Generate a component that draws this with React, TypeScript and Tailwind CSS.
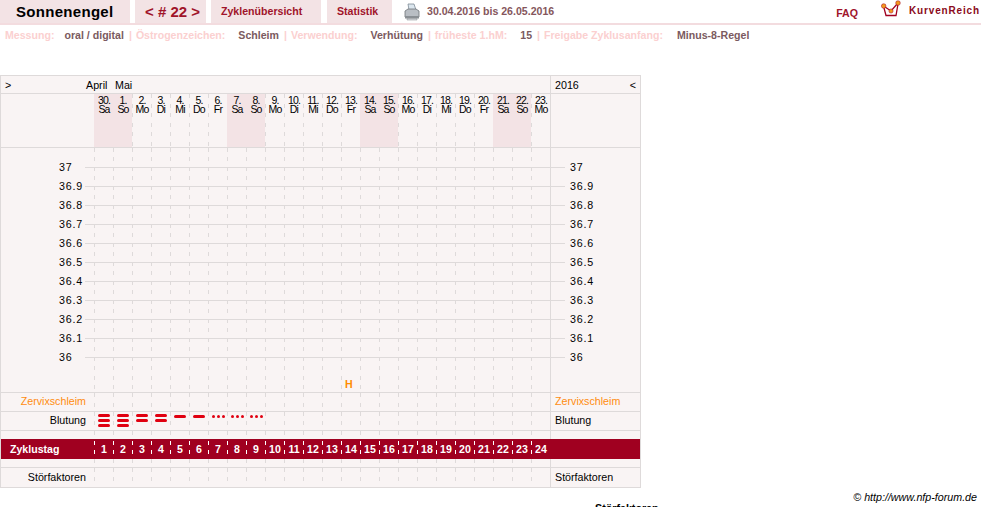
const days = [
  ["30.", "Sa", 1], ["1.", "So", 1], ["2.", "Mo", 0], ["3.", "Di", 0], ["4.", "Mi", 0], ["5.", "Do", 0],
  ["6.", "Fr", 0], ["7.", "Sa", 1], ["8.", "So", 1], ["9.", "Mo", 0], ["10.", "Di", 0], ["11.", "Mi", 0],
  ["12.", "Do", 0], ["13.", "Fr", 0], ["14.", "Sa", 1], ["15.", "So", 1], ["16.", "Mo", 0], ["17.", "Di", 0],
  ["18.", "Mi", 0], ["19.", "Do", 0], ["20.", "Fr", 0], ["21.", "Sa", 1], ["22.", "So", 1], ["23.", "Mo", 0],
] as const;

const temps = ["37", "36.9", "36.8", "36.7", "36.6", "36.5", "36.4", "36.3", "36.2", "36.1", "36"];
const bleeding = [3, 3, 2, 2, 1, 1, 0, 0, 0];

const dash =
  "bg-[repeating-linear-gradient(to_bottom,#dedada_0,#dedada_4px,transparent_4px,transparent_9.5px)] bg-no-repeat bg-[length:1px_100%]";
const dashWhite =
  "bg-[repeating-linear-gradient(to_bottom,#ffffff_0,#ffffff_4px,transparent_4px,transparent_9.5px)] bg-no-repeat bg-[length:1px_100%]";

const Printer = () => (
  <svg width="16" height="18" viewBox="0 0 16 18" className="mr-[7px] shrink-0">
    <path d="M4 1h6l2 6H5z" fill="#dbe6ee" stroke="#7d8a96" strokeWidth="0.8" />
    <path d="M1 8l3-2h8l3 2v6H1z" fill="#b9bec4" stroke="#6f7478" strokeWidth="0.8" />
    <path d="M1 13h14v2.5H1z" fill="#8a8f94" />
    <path d="M3 15.5h10v1.5H3z" fill="#d5d8db" stroke="#85898d" strokeWidth="0.5" />
  </svg>
);

const Logo = () => (
  <svg width="20" height="18" viewBox="0 0 20 18" className="shrink-0">
    <path d="M3 8l2 7.5h10L17 4" fill="none" stroke="#a00020" strokeWidth="1.3" />
    <path d="M2.5 6L10 11 17 3" fill="none" stroke="#a00020" strokeWidth="1.3" />
    <circle cx="2.7" cy="6" r="2.3" fill="#f39a1e" stroke="#a00020" strokeWidth="0.5" />
    <circle cx="10" cy="11" r="2.1" fill="#f39a1e" stroke="#a00020" strokeWidth="0.5" />
    <circle cx="17" cy="3" r="2.3" fill="#f39a1e" stroke="#a00020" strokeWidth="0.5" />
  </svg>
);

const Cols = ({ dark = false }: { dark?: boolean }) => (
  <div className="flex h-full">
    {days.map((_, i) => (
      <div key={i} className={`h-full w-[19px] ${dark ? dashWhite : dash}`} />
    ))}
  </div>
);

const Row = ({
  label,
  color = "text-black",
  right,
  height = "h-[19px] border-b border-[#dedada]",
  leading = "leading-[17px]",
  children,
}: {
  label?: string;
  color?: string;
  right?: string;
  height?: string;
  leading?: string;
  children?: React.ReactNode;
}) => (
  <div className={`flex ${height}`}>
    <div className={`w-[93px] shrink-0 pr-[8px] text-right ${leading} ${color}`}>{label}</div>
    <div className="relative w-[456px] shrink-0">
      <Cols />
      {children}
    </div>
    <div className={`flex-1 border-l border-[#dedada] pl-[4px] ${leading} ${color}`}>{right}</div>
  </div>
);

export default function App() {
  return (
    <div className="relative h-[507px] w-[981px] overflow-hidden bg-white font-['Liberation_Sans',Arial,sans-serif] text-[10.7px]">
      {/* top nav */}
      <div className="flex h-[25px] border-b-2 border-[#f3dcdf] text-[10.6px] font-bold text-[#a0142a]">
        <div className="flex w-[130px] items-center bg-[#f3e3e5] pl-[16px] pt-[2px] text-[15px] tracking-[0.3px] text-black">Sonnenengel</div>
        <div className="ml-[5px] flex w-[71px] items-center bg-[#f3e3e5] pl-[10px] pt-[2px] text-[15px]">&lt; # 22 &gt;</div>
        <div className="ml-[5px] flex w-[110px] items-center bg-[#f3e3e5] pl-[10px] pt-px">Zyklenübersicht</div>
        <div className="ml-[6px] flex w-[65px] items-center bg-[#f3e3e5] pl-[10px] pt-px">Statistik</div>
        <div className="ml-[12px] flex items-center text-[#85565c]">
          <Printer />
          30.04.2016 bis 26.05.2016
        </div>
        <div className="ml-auto flex items-end pb-[1px]">FAQ</div>
        <div className="ml-[23px] mr-[1px] flex items-start">
          <Logo />
          <span className="ml-[8px] mt-[3px] text-[10px] tracking-[0.85px] text-[#8a0a20]">KurvenReich</span>
        </div>
      </div>

      {/* settings */}
      <div className="flex h-[22px] items-center pl-[5px] text-[10.6px] font-bold whitespace-nowrap text-[#fbd0d0]">
        <span>Messung:</span>
        <span className="ml-[10px] text-[#7b5a60]">oral / digital</span>
        <span className="ml-[5px]">|</span>
        <span className="ml-[4px]">Östrogenzeichen:</span>
        <span className="ml-[13px] text-[#7b5a60]">Schleim</span>
        <span className="ml-[5px]">|</span>
        <span className="ml-[4px]">Verwendung:</span>
        <span className="ml-[13px] text-[#7b5a60]">Verhütung</span>
        <span className="ml-[5px]">|</span>
        <span className="ml-[4px]">früheste 1.hM:</span>
        <span className="ml-[13px] text-[#7b5a60]">15</span>
        <span className="ml-[5px]">|</span>
        <span className="ml-[4px]">Freigabe Zyklusanfang:</span>
        <span className="ml-[14px] text-[#7b5a60]">Minus-8-Regel</span>
      </div>

      {/* chart table */}
      <div className="mt-[28px] w-[641px] border border-[#dedada] bg-[#f9f4f4] text-black">
        <div className="flex h-[18px] border-b border-[#dedada] leading-[18px]">
          <div className="w-[85px] pl-[4px]">&gt;</div>
          <div className="w-[29px]">April</div>
          <div className="w-[435px]">Mai</div>
          <div className="flex flex-1 justify-between border-l border-[#dedada] pl-[4px] pr-[4px]">
            <span>2016</span>
            <span>&lt;</span>
          </div>
        </div>

        <div className="flex h-[54px] border-b border-[#dedada]">
          <div className="w-[93px] shrink-0" />
          <div className="flex w-[456px] shrink-0">
            {days.map((d, i) => (
              <div
                key={i}
                className={`w-[19px] pl-px pt-[2px] text-center text-[10.5px] leading-[9px] tracking-[-0.8px] ${
                  d[2] ? "bg-[#f3e3e5]" : dash
                }`}
              >
                {d[0]}
                <br />
                {d[1]}
              </div>
            ))}
          </div>
          <div className="flex-1 border-l border-[#dedada]" />
        </div>

        {/* temperature area */}
        <div className="relative flex h-[245px] border-b border-[#dedada]">
          <div className="w-[93px] shrink-0" />
          <div className="w-[456px] shrink-0">
            <Cols />
          </div>
          <div className="flex-1 border-l border-[#dedada]" />
          <div className="absolute inset-x-0 top-[10px]">
            {temps.map((t) => (
              <div key={t} className="relative flex h-[19px] items-center">
                <div className="w-[84px] pl-[58px] tracking-[0.8px]">{t}</div>
                <div className="h-px w-[480px] bg-[#dedada]" />
                <div className="ml-[5px] tracking-[0.8px]">{t}</div>
              </div>
            ))}
          </div>
          <div className="absolute left-[344px] top-[228px] font-bold text-[#ff8c00]">H</div>
        </div>

        <Row label="Zervixschleim" right="Zervixschleim" color="text-[#ff8c10]" />
        <Row label="Blutung" right="Blutung">
          <div className="absolute inset-0 flex">
            {bleeding.map((n, i) => (
              <div key={i} className="w-[19px] pl-[4px]">
                {n > 0 ? (
                  <div className={`flex w-[12px] flex-col gap-[2px] ${n === 1 ? "pt-[3px]" : "pt-[2px]"}`}>
                    {Array.from({ length: n }).map((_, k) => (
                      <div key={k} className="h-[3px] rounded-full bg-[#e00010]" />
                    ))}
                  </div>
                ) : (
                  <div className="flex gap-[2px] pt-[3px]">
                    <div className="size-[3px] rounded-full bg-[#e00010]" />
                    <div className="size-[3px] rounded-full bg-[#e00010]" />
                    <div className="size-[3px] rounded-full bg-[#e00010]" />
                  </div>
                )}
              </div>
            ))}
          </div>
        </Row>
        <Row height="h-[8px]" />

        <div className="flex h-[20px] bg-[#a00020] text-[10.6px] font-bold text-white">
          <div className="w-[93px] shrink-0 pl-[9px] leading-[20px]">Zyklustag</div>
          <div className="relative w-[456px] shrink-0 py-[2px]">
            <Cols dark />
            <div className="absolute inset-0 flex">
              {Array.from({ length: 24 }).map((_, i) => (
                <div key={i} className="w-[19px] pl-px text-center leading-[20px]">{i + 1}</div>
              ))}
            </div>
          </div>
          <div className="flex-1 border-l border-[#a00020]" />
        </div>

        <Row height="h-[9px] border-b border-[#dedada]" />
        <Row label="Störfaktoren" right="Störfaktoren" height="h-[19px]" leading="leading-[18px]" />
      </div>

      <div className="absolute right-[4px] top-[489px] italic text-black">© http://www.nfp-forum.de</div>
      <div className="absolute left-[595px] top-[500px] text-black font-bold">Störfaktoren</div>
    </div>
  );
}
